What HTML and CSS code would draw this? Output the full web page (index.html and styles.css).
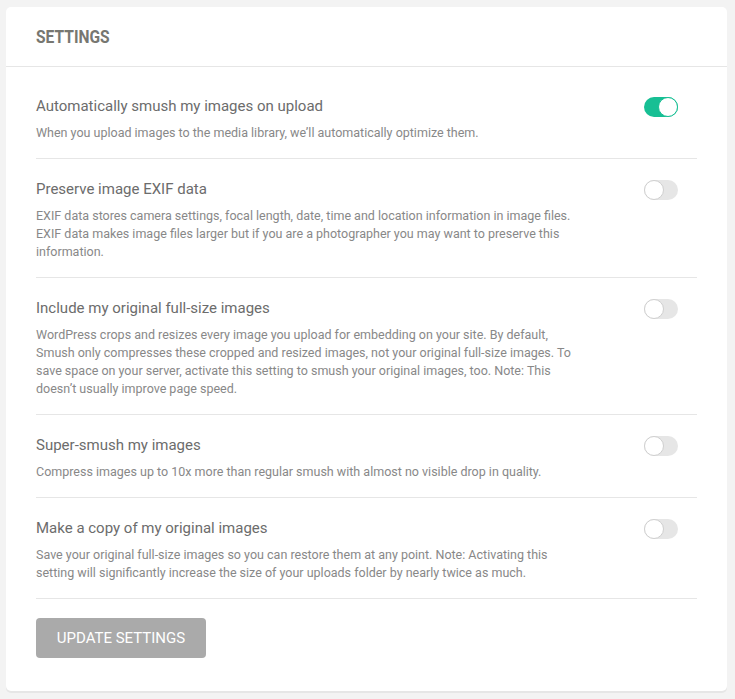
FILE: index.html
```html
<!DOCTYPE html>
<html>
<head>
<meta charset="utf-8">
<link rel="stylesheet" href="styles.css">
</head>
<body>
<div class="card">
  <div class="card-header">
    <h2 class="title">SETTINGS</h2>
  </div>
  <div class="card-body">
    <div class="row">
      <div class="text">
        <div class="label">Automatically smush my images on upload</div>
        <div class="desc">When you upload images to the media library, we’ll automatically optimize them.</div>
      </div>
      <span class="toggle on"><span class="knob"></span></span>
    </div>
    <div class="row">
      <div class="text">
        <div class="label">Preserve image EXIF data</div>
        <div class="desc">EXIF data stores camera settings, focal length, date, time and location information in image files. EXIF data makes image files larger but if you are a photographer you may want to preserve this information.</div>
      </div>
      <span class="toggle"><span class="knob"></span></span>
    </div>
    <div class="row">
      <div class="text">
        <div class="label">Include my original full-size images</div>
        <div class="desc">WordPress crops and resizes every image you upload for embedding on your site. By default, Smush only compresses these cropped and resized images, not your original full-size images. To save space on your server, activate this setting to smush your original images, too. Note: This doesn’t usually improve page speed.</div>
      </div>
      <span class="toggle"><span class="knob"></span></span>
    </div>
    <div class="row">
      <div class="text">
        <div class="label">Super-smush my images</div>
        <div class="desc">Compress images up to 10x more than regular smush with almost no visible drop in quality.</div>
      </div>
      <span class="toggle"><span class="knob"></span></span>
    </div>
    <div class="row">
      <div class="text">
        <div class="label">Make a copy of my original images</div>
        <div class="desc">Save your original full-size images so you can restore them at any point. Note: Activating this setting will significantly increase the size of your uploads folder by nearly twice as much.</div>
      </div>
      <span class="toggle"><span class="knob"></span></span>
    </div>
    <div class="actions">
      <button class="btn">UPDATE SETTINGS</button>
    </div>
  </div>
</div>
</body>
</html>
```

FILE: styles.css
```css
html, body {
  margin: 0;
  padding: 0;
  background: #f3f3f3;
}
body {
  padding: 7px 8px 7px 6px;
  font-family: Roboto, "Liberation Sans", sans-serif;
}
.card {
  background: #fff;
  border-radius: 5px;
  box-shadow: 0 2px 0 #e6e6e6;
}
.card-header {
  height: 60px;
  box-sizing: border-box;
  border-bottom: 1px solid #e6e6e6;
  padding: 0 30px;
  display: flex;
  align-items: center;
}
.title {
  margin: 0;
  font-size: 18px;
  font-weight: 700;
  color: #777771;
  display: inline-block;
  transform: scaleX(0.865);
  transform-origin: left center;
  line-height: 22px;
  padding-top: 1px;
}
.card-body {
  padding: 9px 30px 33px;
}
.row {
  display: flex;
  align-items: flex-start;
  justify-content: space-between;
  padding: 19px 0 16px;
  border-bottom: 1px solid #e6e6e6;
}
.text {
  width: 550px;
}
.label {
  font-size: 15px;
  line-height: 22px;
  color: #6c6c6c;
}
.desc {
  margin-top: 7px;
  font-size: 12.5px;
  line-height: 18px;
  color: #888;
}
.toggle {
  position: relative;
  display: block;
  width: 34px;
  height: 20px;
  border-radius: 10px;
  background: #e6e6e6;
  margin-top: 2px;
  margin-right: 19px;
  flex-shrink: 0;
}
.toggle.on {
  background: #17bf94;
}
.knob {
  position: absolute;
  top: 0;
  left: 0;
  width: 18px;
  height: 18px;
  border-radius: 50%;
  background: #fff;
  border: 1px solid #cfcfcf;
}
.toggle.on .knob {
  left: auto;
  right: 0;
  border-color: #17bf94;
}
.actions {
  padding-top: 19px;
}
.btn {
  width: 170px;
  height: 40px;
  border: 0;
  border-radius: 4px;
  background: #aaaaaa;
  color: #fff;
  font-family: Roboto, "Liberation Sans", sans-serif;
  font-size: 15px;
  font-weight: 400;
  padding: 0;
}
```
